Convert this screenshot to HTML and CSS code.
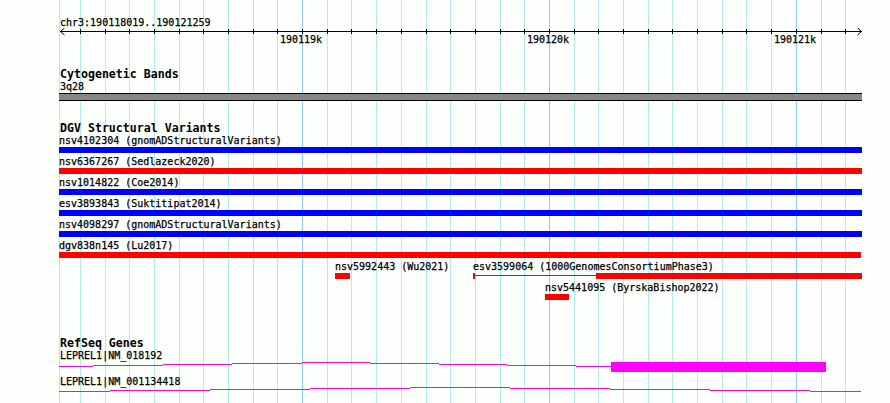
FILE: index.html
```html
<!DOCTYPE html>
<html>
<head>
<meta charset="utf-8">
<title>chr3:190118019..190121259</title>
<link rel="stylesheet" href="styles.css">
</head>
<body>
<div class="browser">
  <svg class="grid" width="890" height="403" shape-rendering="crispEdges">
    <rect class="minor" x="59" y="0" width="1" height="403"/>
    <rect class="minor" x="80" y="0" width="1" height="403"/>
    <rect class="minor" x="105" y="0" width="1" height="403"/>
    <rect class="minor" x="129" y="0" width="1" height="403"/>
    <rect class="minor" x="154" y="0" width="1" height="403"/>
    <rect class="minor" x="179" y="0" width="1" height="403"/>
    <rect class="minor" x="203" y="0" width="1" height="403"/>
    <rect class="minor" x="228" y="0" width="1" height="403"/>
    <rect class="minor" x="253" y="0" width="1" height="403"/>
    <rect class="minor" x="277" y="0" width="1" height="403"/>
    <rect class="major" x="302" y="0" width="1" height="403"/>
    <rect class="minor" x="327" y="0" width="1" height="403"/>
    <rect class="minor" x="351" y="0" width="1" height="403"/>
    <rect class="minor" x="376" y="0" width="1" height="403"/>
    <rect class="minor" x="401" y="0" width="1" height="403"/>
    <rect class="minor" x="426" y="0" width="1" height="403"/>
    <rect class="minor" x="450" y="0" width="1" height="403"/>
    <rect class="minor" x="475" y="0" width="1" height="403"/>
    <rect class="minor" x="500" y="0" width="1" height="403"/>
    <rect class="minor" x="524" y="0" width="1" height="403"/>
    <rect class="major" x="549" y="0" width="1" height="403"/>
    <rect class="minor" x="574" y="0" width="1" height="403"/>
    <rect class="minor" x="598" y="0" width="1" height="403"/>
    <rect class="minor" x="623" y="0" width="1" height="403"/>
    <rect class="minor" x="648" y="0" width="1" height="403"/>
    <rect class="minor" x="672" y="0" width="1" height="403"/>
    <rect class="minor" x="697" y="0" width="1" height="403"/>
    <rect class="minor" x="722" y="0" width="1" height="403"/>
    <rect class="minor" x="746" y="0" width="1" height="403"/>
    <rect class="minor" x="771" y="0" width="1" height="403"/>
    <rect class="major" x="796" y="0" width="1" height="403"/>
    <rect class="minor" x="821" y="0" width="1" height="403"/>
    <rect class="minor" x="845" y="0" width="1" height="403"/>
  </svg>

  <section class="ruler">
    <div class="locus">chr3:190118019..190121259</div>
    <div class="scale">
      <svg class="axis" width="890" height="19">
        <g class="axis-line" shape-rendering="crispEdges">
          <rect x="60" y="3" width="802" height="1"/>
          <rect x="80" y="1" width="1" height="5"/>
          <rect x="105" y="1" width="1" height="5"/>
          <rect x="129" y="1" width="1" height="5"/>
          <rect x="154" y="1" width="1" height="5"/>
          <rect x="179" y="1" width="1" height="5"/>
          <rect x="203" y="1" width="1" height="5"/>
          <rect x="228" y="1" width="1" height="5"/>
          <rect x="253" y="1" width="1" height="5"/>
          <rect x="277" y="1" width="1" height="5"/>
          <rect x="302" y="1" width="1" height="5"/>
          <rect x="327" y="1" width="1" height="5"/>
          <rect x="351" y="1" width="1" height="5"/>
          <rect x="376" y="1" width="1" height="5"/>
          <rect x="401" y="1" width="1" height="5"/>
          <rect x="426" y="1" width="1" height="5"/>
          <rect x="450" y="1" width="1" height="5"/>
          <rect x="475" y="1" width="1" height="5"/>
          <rect x="500" y="1" width="1" height="5"/>
          <rect x="524" y="1" width="1" height="5"/>
          <rect x="549" y="1" width="1" height="5"/>
          <rect x="574" y="1" width="1" height="5"/>
          <rect x="598" y="1" width="1" height="5"/>
          <rect x="623" y="1" width="1" height="5"/>
          <rect x="648" y="1" width="1" height="5"/>
          <rect x="672" y="1" width="1" height="5"/>
          <rect x="697" y="1" width="1" height="5"/>
          <rect x="722" y="1" width="1" height="5"/>
          <rect x="746" y="1" width="1" height="5"/>
          <rect x="771" y="1" width="1" height="5"/>
          <rect x="796" y="1" width="1" height="5"/>
          <rect x="821" y="1" width="1" height="5"/>
          <rect x="845" y="1" width="1" height="5"/>
        </g>
        <polyline class="arrow" points="64.5,0 60.5,3.5 64.5,7"/>
        <polyline class="arrow" points="857.5,0 861.5,3.5 857.5,7"/>
      </svg>
      <span class="tick-label" style="left:280px">190119k</span>
      <span class="tick-label" style="left:527px">190120k</span>
      <span class="tick-label" style="left:774px">190121k</span>
    </div>
  </section>

  <section class="track cyto">
    <h2 class="track-title">Cytogenetic Bands</h2>
    <div class="label band-label">3q28</div>
    <div class="band"></div>
  </section>

  <section class="track dgv">
    <h2 class="track-title">DGV Structural Variants</h2>
    <div class="row">
      <div class="feature" style="left:59px;width:803px">
        <span class="label">nsv4102304 (gnomADStructuralVariants)</span>
        <span class="bar blue"></span>
      </div>
    </div>
    <div class="row">
      <div class="feature" style="left:59px;width:803px">
        <span class="label">nsv6367267 (Sedlazeck2020)</span>
        <span class="bar red"></span>
      </div>
    </div>
    <div class="row">
      <div class="feature" style="left:59px;width:803px">
        <span class="label">nsv1014822 (Coe2014)</span>
        <span class="bar blue"></span>
      </div>
    </div>
    <div class="row">
      <div class="feature" style="left:59px;width:803px">
        <span class="label">esv3893843 (Suktitipat2014)</span>
        <span class="bar blue"></span>
      </div>
    </div>
    <div class="row">
      <div class="feature" style="left:59px;width:803px">
        <span class="label">nsv4098297 (gnomADStructuralVariants)</span>
        <span class="bar blue"></span>
      </div>
    </div>
    <div class="row">
      <div class="feature" style="left:59px;width:802px">
        <span class="label">dgv838n145 (Lu2017)</span>
        <span class="bar red"></span>
      </div>
    </div>
    <div class="row">
      <div class="feature" style="left:335px;width:15px">
        <span class="label">nsv5992443 (Wu2021)</span>
        <span class="bar red"></span>
      </div>
      <div class="feature" style="left:473px;width:389px">
        <span class="label">esv3599064 (1000GenomesConsortiumPhase3)</span>
        <span class="bar split">
          <span class="cap"></span>
          <span class="thin"></span>
          <span class="thick" style="width:266px"></span>
        </span>
      </div>
    </div>
    <div class="row">
      <div class="feature" style="left:545px;width:24px">
        <span class="label">nsv5441095 (ByrskaBishop2022)</span>
        <span class="bar red"></span>
      </div>
    </div>
  </section>

  <section class="track refseq">
    <h2 class="track-title">RefSeq Genes</h2>
    <div class="gene-row">
      <div class="label gene-label">LEPREL1|NM_018192</div>
      <svg class="gene" width="890" height="15" shape-rendering="crispEdges">
        <rect x="59" y="5" width="34" height="1"/>
        <rect x="93" y="4" width="70" height="1"/>
        <rect x="163" y="3" width="69" height="1"/>
        <rect x="232" y="2" width="70" height="1"/>
        <rect x="302" y="1" width="68" height="1"/>
        <rect x="370" y="2" width="69" height="1"/>
        <rect x="439" y="3" width="68" height="1"/>
        <rect x="507" y="4" width="69" height="1"/>
        <rect x="576" y="5" width="35" height="1"/>
        <rect x="611" y="1" width="215" height="10"/>
      </svg>
    </div>
    <div class="gene-row last">
      <div class="label gene-label">LEPREL1|NM_001134418</div>
      <svg class="gene" width="890" height="16" shape-rendering="crispEdges">
        <rect x="59" y="4" width="51" height="1"/>
        <rect x="110" y="3" width="100" height="1"/>
        <rect x="210" y="2" width="100" height="1"/>
        <rect x="310" y="1" width="100" height="1"/>
        <rect x="410" y="0" width="100" height="1"/>
        <rect x="510" y="1" width="100" height="1"/>
        <rect x="610" y="2" width="100" height="1"/>
        <rect x="710" y="3" width="100" height="1"/>
        <rect x="810" y="4" width="51" height="1"/>
      </svg>
    </div>
  </section>
</div>
</body>
</html>
```

FILE: styles.css
```css
html, body {
  margin: 0;
  padding: 0;
}

body {
  width: 890px;
  height: 403px;
  overflow: hidden;
  background: #fdfffd;
  color: #000;
  font-family: "DejaVu Sans Mono", "Liberation Mono", monospace;
  font-size: 10px;
}

.browser {
  position: relative;
  width: 890px;
  height: 403px;
}

.grid {
  position: absolute;
  left: 0;
  top: 0;
  z-index: 0;
}

.grid .minor { fill: #afeeee; }
.grid .major { fill: #87cefa; }

.ruler, .track {
  position: relative;
  z-index: 1;
}

/* ruler */
.ruler {
  height: 47px;
  box-sizing: border-box;
  padding-top: 17px;
}

.locus,
.tick-label,
.label {
  -webkit-text-stroke: 0.25px #000;
}

.locus {
  line-height: 11px;
  padding-left: 60px;
  white-space: nowrap;
}

.scale {
  position: relative;
  height: 19px;
}

.axis {
  display: block;
}

.axis-line rect { fill: #000; }

.arrow {
  fill: none;
  stroke: #000;
  stroke-width: 1;
}

.tick-label {
  position: absolute;
  top: 6px;
  line-height: 11px;
  white-space: nowrap;
}

/* tracks */
.track-title {
  margin: 0;
  padding-left: 60px;
  font-size: 11.6px;
  font-weight: bold;
  line-height: 14px;
  white-space: nowrap;
}

.cyto { margin-top: 20px; }
.dgv { margin-top: 20px; }
.refseq { margin-top: 33px; }

.label {
  display: block;
  line-height: 11px;
  white-space: nowrap;
}

.band-label,
.gene-label {
  padding-left: 60px;
}

.band {
  margin: 1px 0 0 59px;
  width: 803px;
  height: 6px;
  border-top: 1px solid #000;
  border-bottom: 1px solid #000;
  background: #878787;
}

/* DGV rows */
.row {
  position: relative;
  height: 21px;
}

.feature {
  position: absolute;
  top: 0;
  display: flex;
  flex-direction: column;
  align-items: stretch;
}

.bar {
  display: block;
  margin-top: 1px;
  height: 6px;
}

.blue { background: #0000ff; }
.red { background: #ff0000; }

.split {
  display: flex;
}

.cap {
  width: 2px;
  height: 6px;
  background: #ff0000;
}

.thin {
  flex: 1;
  height: 1px;
  margin-top: 2px;
  background: #ff0000;
}

.thick {
  height: 6px;
  background: #ff0000;
}

/* genes */
.gene-row {
  height: 26px;
}

.gene-row.last {
  height: 27px;
}

.gene {
  display: block;
  fill: #ff00ff;
}
```
